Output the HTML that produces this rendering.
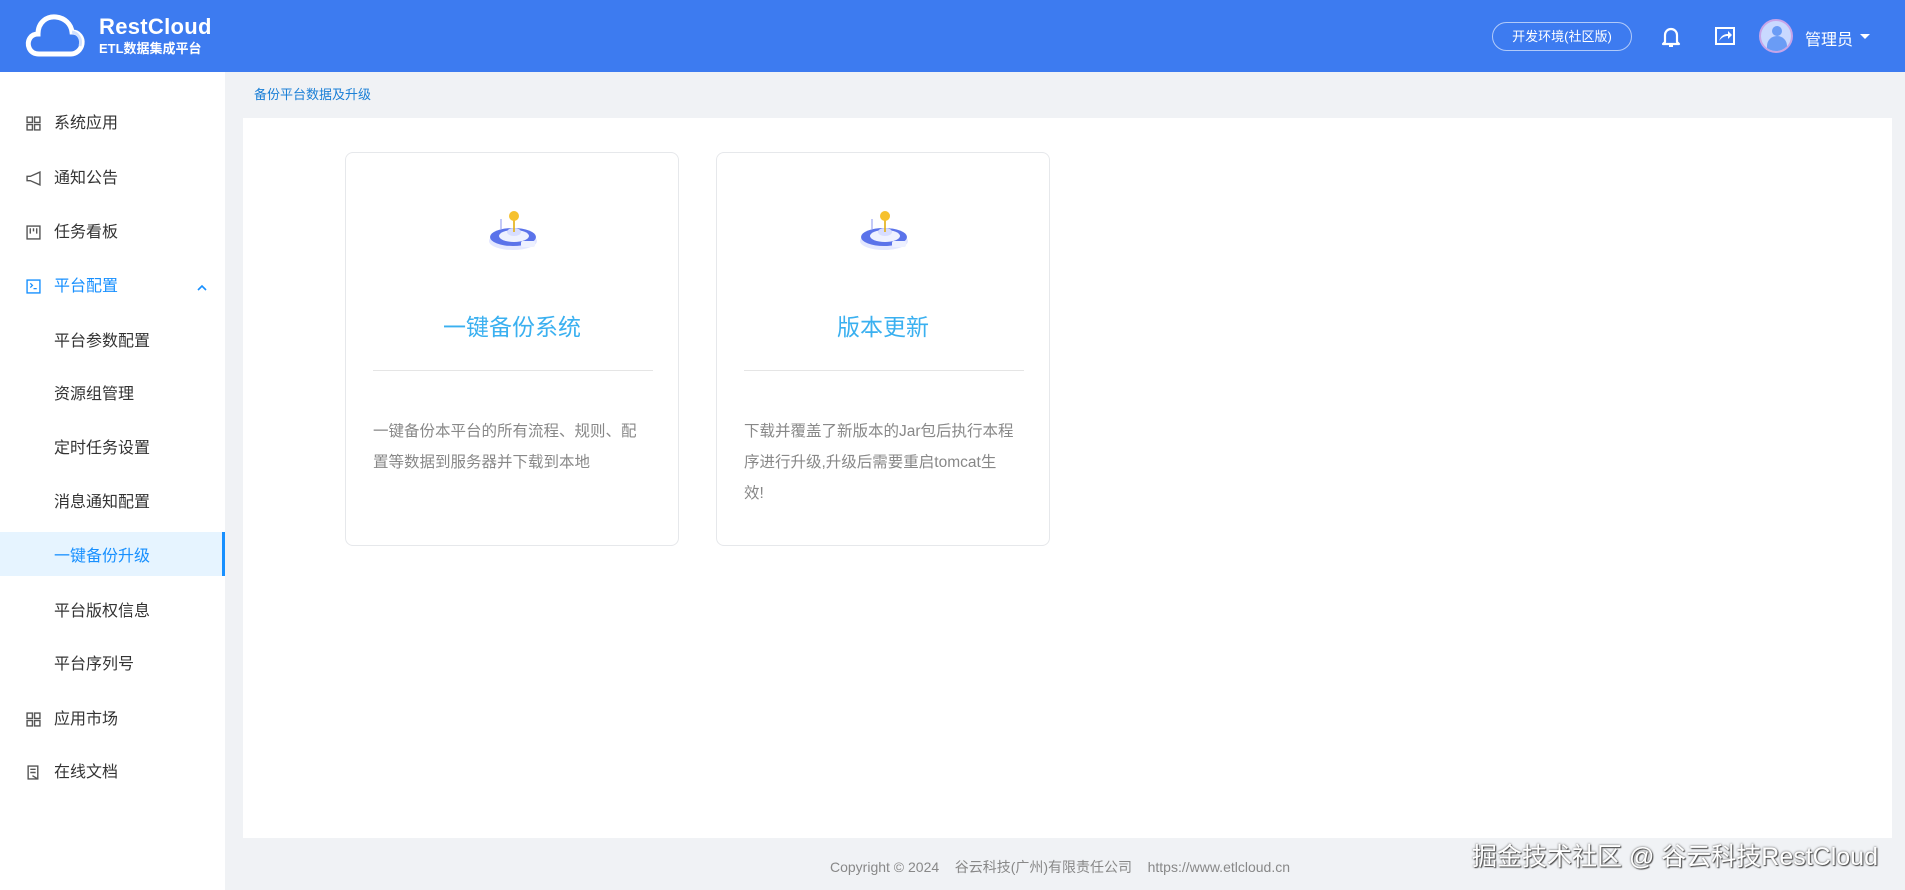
<!DOCTYPE html>
<html><head><meta charset="utf-8"><style>
*{margin:0;padding:0;box-sizing:border-box}
body{width:1905px;height:890px;overflow:hidden;background:#f0f2f5;font-family:"Liberation Sans","Noto Sans CJK SC",sans-serif;position:relative}
.hdr{position:absolute;left:0;top:0;width:1905px;height:72px;background:#3d7bf0}
.side{position:absolute;left:0;top:72px;width:225px;height:818px;background:#fff}
.it{position:absolute;left:0;width:225px;height:44px;line-height:44px;font-size:16px;color:#333;padding-left:54px}
.it .ic{position:absolute;left:26px;top:14px;width:15px;height:15px}
.act{background:#e6f4ff;color:#1890ff;border-right:3px solid #1890ff}
.blue{color:#1890ff}
.panel{position:absolute;left:243px;top:118px;width:1649px;height:720px;background:#fff}
.card{position:absolute;top:152px;width:334px;height:394px;border:1px solid #e6e8eb;border-radius:8px;background:#fff}
.card .t{position:absolute;top:155px;width:100%;text-align:center;font-size:23px;color:#3ab0f0}
.card .d{position:absolute;left:27px;top:217px;width:280px;border-top:1px solid #e5e5e5}
.card .p{position:absolute;left:27px;top:263px;width:270px;font-size:15.5px;line-height:31px;color:#888;word-break:break-all}
.card .icon{position:absolute;left:137px;top:54px}
</style></head><body>
<div class="hdr">
<svg style="position:absolute;left:25px;top:12px" width="62" height="46" viewBox="0 0 62 46"><path d="M14 42 C4 42 1 32 5 26 C7 23 10 22 13 22 C13 10 22 4 31 5 C40 6 46 12 47 20 C54 20 58 26 57 32 C56 38 51 42 46 42 Z" fill="none" stroke="#fff" stroke-width="5"/><path d="M47 20 C53 21 57 27 55 34" fill="none" stroke="#cfe0ff" stroke-width="3"/></svg>
<div style="position:absolute;left:99px;top:14px;color:#fff;font-size:22px;font-weight:bold;letter-spacing:0.3px">RestCloud</div>
<div style="position:absolute;left:99px;top:38px;color:#fff;font-size:13px;font-weight:bold">ETL数据集成平台</div>
<div style="position:absolute;left:1492px;top:22px;width:140px;height:29px;border:1px solid rgba(255,255,255,.6);border-radius:15px;color:#fff;font-size:13px;text-align:center;line-height:27px">开发环境(社区版)</div>
<svg style="position:absolute;left:1660px;top:25px" width="22" height="24" viewBox="0 0 22 24"><path d="M5 17 V10 A6 6 0 0 1 17 10 V17 L19 19 H3 Z" fill="none" stroke="#fff" stroke-width="2.2" stroke-linejoin="round"/><path d="M9 21 H13" stroke="#fff" stroke-width="2"/></svg>
<svg style="position:absolute;left:1714px;top:26px" width="22" height="20" viewBox="0 0 22 20"><rect x="2" y="2" width="18" height="16" fill="none" stroke="#fff" stroke-width="2"/><path d="M5 15 C7 9 11 8 14 8 V5 L18 9 L14 13 V10 C11 10 8 11 5 15Z" fill="#fff"/></svg>
<div style="position:absolute;left:1759px;top:19px;width:34px;height:34px;border-radius:50%;background:#c9d9ff;border:2px solid #c7a4e8;overflow:hidden"><div style="position:absolute;left:11px;top:5px;width:10px;height:10px;border-radius:50%;background:#6a9cf5"></div><div style="position:absolute;left:6px;top:15px;width:20px;height:16px;border-radius:10px 10px 4px 4px;background:#6a9cf5"></div></div>
<div style="position:absolute;left:1805px;top:26px;color:#fff;font-size:16px">管理员</div>
<div style="position:absolute;left:1860px;top:34px;border:5px solid transparent;border-top:5px solid #fff"></div>
</div>
<div class="side">
<div class="it" style="top:30px"><svg class="ic" viewBox="0 0 14 14"><g fill="none" stroke="#555" stroke-width="1.3"><rect x="1" y="1" width="5" height="5"/><rect x="8" y="1" width="5" height="5"/><rect x="1" y="8" width="5" height="5"/><rect x="8" y="8" width="5" height="5"/></g></svg>系统应用</div>
<div class="it" style="top:85px"><svg class="ic" viewBox="0 0 14 14"><path d="M1 5 H4 L13 1 V13 L4 9 H1 Z" fill="none" stroke="#555" stroke-width="1.3"/></svg>通知公告</div>
<div class="it" style="top:139px"><svg class="ic" viewBox="0 0 14 14"><rect x="1" y="1" width="12" height="12" fill="none" stroke="#555" stroke-width="1.3"/><path d="M4 3V8M7 3V6M10 3V8" stroke="#555" stroke-width="1.3"/></svg>任务看板</div>
<div class="it blue" style="top:193px"><svg class="ic" viewBox="0 0 14 14"><rect x="1" y="1" width="12" height="12" fill="none" stroke="#1890ff" stroke-width="1.3"/><path d="M4 4L6 6L4 8M7 9H10" fill="none" stroke="#1890ff" stroke-width="1.2"/></svg>平台配置<svg style="position:absolute;left:197px;top:19px" width="10" height="7" viewBox="0 0 10 7"><path d="M1 6L5 2L9 6" fill="none" stroke="#1890ff" stroke-width="1.6"/></svg></div>
<div class="it" style="top:248px">平台参数配置</div>
<div class="it" style="top:301px">资源组管理</div>
<div class="it" style="top:355px">定时任务设置</div>
<div class="it" style="top:409px">消息通知配置</div>
<div class="it act" style="top:460px;line-height:50px">一键备份升级</div>
<div class="it" style="top:518px">平台版权信息</div>
<div class="it" style="top:571px">平台序列号</div>
<div class="it" style="top:626px"><svg class="ic" viewBox="0 0 14 14"><g fill="none" stroke="#555" stroke-width="1.3"><rect x="1" y="1" width="5" height="5"/><rect x="8" y="1" width="5" height="5"/><rect x="1" y="8" width="5" height="5"/><rect x="8" y="8" width="5" height="5"/></g></svg>应用市场</div>
<div class="it" style="top:679px"><svg class="ic" viewBox="0 0 14 14"><path d="M2 1H11V13H2Z M4 4H9M4 7H9M6 10L11 13" fill="none" stroke="#555" stroke-width="1.3"/></svg>在线文档</div>
</div>
<div style="position:absolute;left:254px;top:84px;font-size:13px;color:#1a7fd6">备份平台数据及升级</div>
<div class="panel"></div>
<div class="card" style="left:345px">
<svg class="icon" width="60" height="48" viewBox="0 0 60 48"><ellipse cx="30" cy="34" rx="24" ry="9" fill="#e4e8ff"/><ellipse cx="30" cy="30" rx="23" ry="9" fill="#5b73ea"/><ellipse cx="31" cy="29" rx="15" ry="6" fill="#eef1ff"/><rect x="38" y="34" width="14" height="6" rx="2" fill="#eef1ff"/><ellipse cx="31" cy="25" rx="7" ry="4" fill="#d7ddff"/><line x1="31" y1="12" x2="31" y2="25" stroke="#e0a800" stroke-width="1.5"/><circle cx="31" cy="9" r="5" fill="#f6c12e"/><line x1="18" y1="12" x2="18" y2="22" stroke="#8896f0" stroke-width="1"/></svg>
<div class="t">一键备份系统</div><div class="d"></div>
<div class="p">一键备份本平台的所有流程、规则、配置等数据到服务器并下载到本地</div></div>
<div class="card" style="left:716px">
<svg class="icon" width="60" height="48" viewBox="0 0 60 48"><ellipse cx="30" cy="34" rx="24" ry="9" fill="#e4e8ff"/><ellipse cx="30" cy="30" rx="23" ry="9" fill="#5b73ea"/><ellipse cx="31" cy="29" rx="15" ry="6" fill="#eef1ff"/><rect x="38" y="34" width="14" height="6" rx="2" fill="#eef1ff"/><ellipse cx="31" cy="25" rx="7" ry="4" fill="#d7ddff"/><line x1="31" y1="12" x2="31" y2="25" stroke="#e0a800" stroke-width="1.5"/><circle cx="31" cy="9" r="5" fill="#f6c12e"/><line x1="18" y1="12" x2="18" y2="22" stroke="#8896f0" stroke-width="1"/></svg>
<div class="t">版本更新</div><div class="d"></div>
<div class="p">下载并覆盖了新版本的Jar包后执行本程序进行升级,升级后需要重启tomcat生效!</div></div>
<div style="position:absolute;left:830px;top:857px;font-size:14px;color:#888">Copyright © 2024&nbsp;&nbsp;&nbsp;&nbsp;谷云科技(广州)有限责任公司&nbsp;&nbsp;&nbsp;&nbsp;https://www.etlcloud.cn</div>
<div style="position:absolute;left:1472px;top:837px;font-size:25px;color:#fff;text-shadow:0 0 2px #555,1px 1px 1px #444">掘金技术社区 @ 谷云科技RestCloud</div>
</body></html>
